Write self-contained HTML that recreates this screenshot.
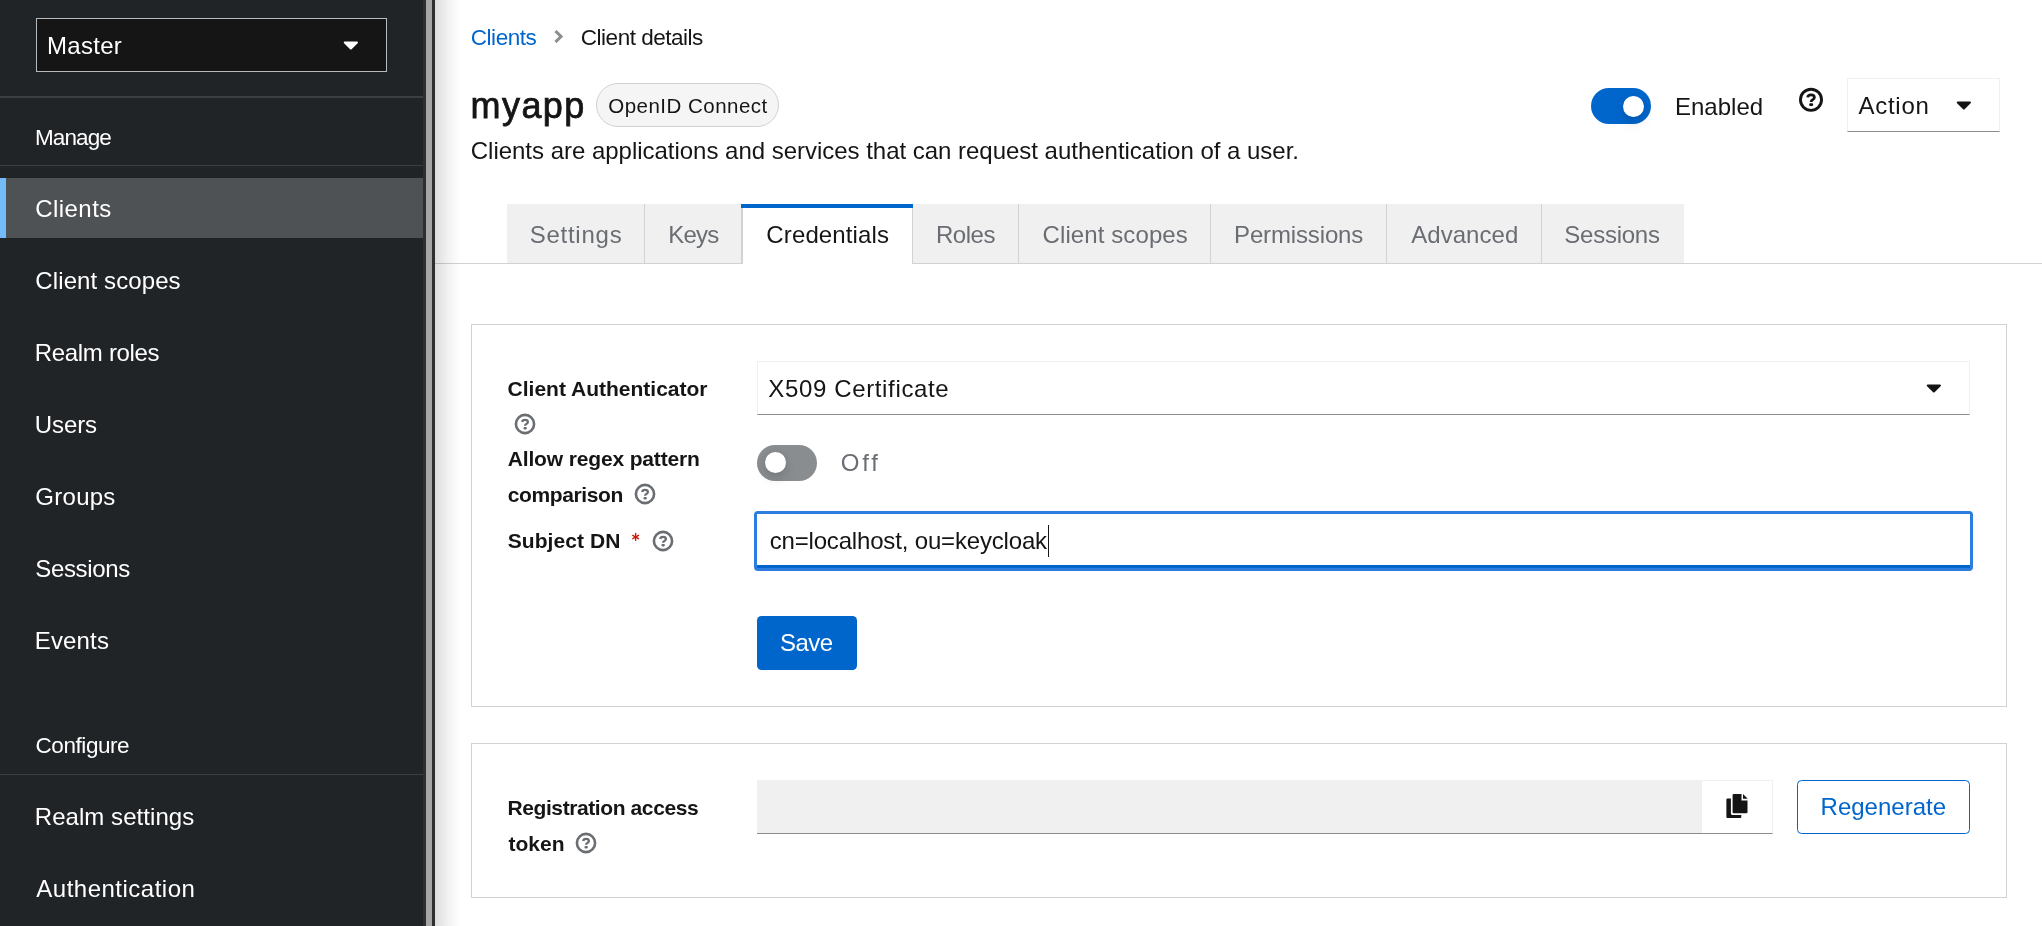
<!DOCTYPE html>
<html lang="en">
<head>
<meta charset="utf-8">
<title>Keycloak Administration Console</title>
<style>
*{box-sizing:border-box;margin:0;padding:0}
html,body{width:2042px;height:926px;overflow:hidden;background:#fff}
body{font-family:"Liberation Sans",sans-serif;color:#151515;position:relative;font-size:24px}
.abs{position:absolute}
.t{position:absolute;white-space:nowrap;line-height:1}
#txt{position:absolute;left:0;top:0;width:2042px;height:926px;will-change:transform}

/* ---------- sidebar ---------- */
#side{position:absolute;left:0;top:0;width:435px;height:926px;background:#212427}
#track{position:absolute;left:423px;top:0;width:12px;height:926px;background:#2f2f2f}
#thumb{position:absolute;left:426px;top:0;width:6px;height:926px;background:#a6a6a5}
#realm{position:absolute;left:36px;top:18px;width:351px;height:54px;background:#151515;border:1px solid #b8bbbe}
.hr{position:absolute;left:0;width:423px;background:#3c3f42}
#cur{position:absolute;left:0;top:178px;width:423px;height:60px;background:#4f5255}
#cur i{position:absolute;left:0;top:0;width:6px;height:60px;background:#73bcf7}

/* ---------- main ---------- */
#main{position:absolute;left:435px;top:0;width:1607px;height:926px;background:#fff}
#shadow{position:absolute;left:435px;top:0;width:26px;height:926px;background:linear-gradient(to right,rgba(3,3,3,.135),rgba(3,3,3,.085) 30%,rgba(3,3,3,.04) 60%,rgba(3,3,3,.012) 85%,rgba(3,3,3,0))}
.card{position:absolute;left:471px;width:1536px;border:1px solid #d2d2d2;background:#fff}
.tab{position:absolute;top:204px;height:59px;background:#f0f0f0;border-right:1px solid #d2d2d2}
.field{position:absolute;height:54px;border:1px solid #f0f0f0;border-bottom:1px solid #8a8d90;background:#fff}
.sw{position:absolute;width:60px;height:36px;border-radius:18px}
.knob{position:absolute;width:21.2px;height:21.2px;border-radius:50%;background:#fff;box-shadow:0 6px 12px 0 rgba(3,3,3,.12),0 0 6px 0 rgba(3,3,3,.06)}
</style>
</head>
<body>

<!-- ================= MAIN ================= -->
<div id="main"></div>

<!-- breadcrumb chevron -->
<svg class="abs" style="left:552px;top:29px" width="13" height="16" viewBox="0 0 13 16"><path d="M3.5 2 L9 7.5 L3.5 13" fill="none" stroke="#8a8d90" stroke-width="3.1"/></svg>

<!-- label pill -->
<div class="abs" style="left:596px;top:83px;width:183px;height:44px;border:1px solid #d2d2d2;border-radius:22px;background:#f5f5f5"></div>

<!-- enabled switch -->
<div class="sw" style="left:1591px;top:88px;background:#0066cc"></div>
<div class="knob" style="left:1623px;top:95.6px"></div>
<!-- help icon (header) -->
<svg class="abs" style="left:1798px;top:87px" width="26" height="26" viewBox="0 0 26 26"><circle cx="13" cy="12.8" r="10.55" fill="none" stroke="#151515" stroke-width="2.9"/><path d="M9.7 10.4 C9.9 8.7 11.2 7.9 13 7.9 C15 7.9 16.4 8.9 16.4 10.5 C16.4 12.7 13.1 12.5 13.1 14.9" fill="none" stroke="#151515" stroke-width="2.7"/><rect x="11.2" y="16.2" width="3.9" height="2.9" rx="1" fill="#151515"/></svg>
<!-- action dropdown -->
<div class="field" style="left:1847px;top:78px;width:153px"></div>
<svg class="abs" style="left:1956px;top:101px" width="16" height="9" viewBox="0 0 16 9"><path d="M1.8 1.5 H13.9 L7.85 7.45 Z" fill="#151515" stroke="#151515" stroke-width="2.1" stroke-linejoin="round"/></svg>

<!-- tabs -->
<div class="abs" style="left:435px;top:263px;width:1607px;height:1px;background:#d2d2d2"></div>
<div class="tab" style="left:507px;width:138px"></div>
<div class="tab" style="left:645px;width:97px"></div>
<div class="tab" style="left:742px;width:171px;background:#fff;border-top:4px solid #0066cc;border-left:1px solid #d2d2d2;height:60px"></div>
<div class="abs" style="left:741px;top:204px;width:172px;height:4px;background:#0066cc"></div>
<div class="tab" style="left:913px;width:106px"></div>
<div class="tab" style="left:1019px;width:192px"></div>
<div class="tab" style="left:1211px;width:176px"></div>
<div class="tab" style="left:1387px;width:155px"></div>
<div class="tab" style="left:1542px;width:142px;border-right:0"></div>

<!-- card 1 -->
<div class="card" style="top:324px;height:383px"></div>
<div class="field" style="left:757px;top:361px;width:1213px"></div>
<svg class="abs" style="left:1926px;top:384px" width="16" height="9" viewBox="0 0 16 9"><path d="M1.8 1.5 H13.9 L7.85 7.45 Z" fill="#151515" stroke="#151515" stroke-width="2.1" stroke-linejoin="round"/></svg>

<!-- off switch -->
<div class="sw" style="left:757px;top:445px;background:#8a8d90"></div>
<div class="knob" style="left:764.9px;top:452.2px"></div>

<!-- required asterisk -->
<svg class="abs" style="left:631px;top:532px" width="10" height="10" viewBox="0 0 10 10"><g stroke="#c9190b" stroke-width="1.35"><path d="M4.64 0.9 V8.95"/><path d="M1.3 3.05 L8 6.8"/><path d="M1.3 6.8 L8 3.05"/></g></svg>

<!-- focused input -->
<div class="abs" style="left:754px;top:511px;width:1219px;height:60px;border-radius:4px;background:#2d7de0"></div>
<div class="abs" style="left:757px;top:514px;width:1213px;height:54px;background:#fff;border-bottom:3px solid #0066cc"></div>
<div id="caret" class="abs" style="left:1047.6px;top:524.5px;width:1.5px;height:32px;background:#151515"></div>

<!-- save -->
<div class="abs" style="left:757px;top:616px;width:100px;height:54px;border-radius:4.5px;background:#0066cc"></div>

<!-- card 2 -->
<div class="card" style="top:743px;height:155px"></div>
<div class="abs" style="left:757px;top:780px;width:945px;height:54px;background:#f0f0f0;border-bottom:1px solid #8a8d90"></div>
<div class="field" style="left:1702px;top:780px;width:71px;border-left:0"></div>
<!-- copy icon -->
<svg class="abs" style="left:1726px;top:793px" width="23" height="26" viewBox="0 0 23 26"><path d="M6.6 2.1 Q6.6 1.1 7.6 1.1 H15.5 V7.4 H21.5 V19.3 Q21.5 20.3 20.5 20.3 H7.6 Q6.6 20.3 6.6 19.3 Z" fill="#151515"/><path d="M17 0.9 L21.5 5.4 V5.7 H17 Z" fill="#151515"/><path d="M4.9 5.4 V20.6 Q4.9 22 6.3 22 H15.3 V24 Q15.3 25 14.3 25 H1.4 Q0.4 25 0.4 24 V6.4 Q0.4 5.4 1.4 5.4 Z" fill="#151515"/></svg>
<!-- regenerate -->
<div class="abs" style="left:1797px;top:780px;width:173px;height:54px;border:1.5px solid #0066cc;border-radius:4.5px;background:#fff"></div>

<!-- field help icons -->
<svg class="abs hq" style="left:513.55px;top:413.4px" width="22" height="22" viewBox="0 0 22 22"><use href="#hq"/></svg>
<svg class="abs hq" style="left:633.5px;top:483.2px" width="22" height="22" viewBox="0 0 22 22"><use href="#hq"/></svg>
<svg class="abs hq" style="left:651.5px;top:530.45px" width="22" height="22" viewBox="0 0 22 22"><use href="#hq"/></svg>
<svg class="abs hq" style="left:575.45px;top:832.4px" width="22" height="22" viewBox="0 0 22 22"><use href="#hq"/></svg>
<svg width="0" height="0" style="position:absolute"><defs><g id="hq"><circle cx="11" cy="11" r="9.1" fill="none" stroke="#6a6e73" stroke-width="2.6"/><path d="M8.2 9 C8.4 7.5 9.5 6.8 11 6.8 C12.7 6.8 13.9 7.7 13.9 9 C13.9 10.9 11.1 10.8 11.1 12.8" fill="none" stroke="#6a6e73" stroke-width="2.3"/><rect x="9.5" y="13.9" width="3.3" height="2.5" rx="0.8" fill="#6a6e73"/></g></defs></svg>


<div id="shadow"></div>

<!-- ================= SIDEBAR ================= -->
<div id="side"></div>
<div id="track"></div>
<div id="thumb"></div>
<div id="realm"></div>
<svg class="abs" style="left:343px;top:41px" width="16" height="9" viewBox="0 0 16 9"><path d="M1.8 1.5 H13.9 L7.85 7.45 Z" fill="#fff" stroke="#fff" stroke-width="2.1" stroke-linejoin="round"/></svg>
<div class="hr" style="top:96px;height:2px"></div>
<div class="hr" style="top:165px;height:1px"></div>
<div id="cur"><i></i></div>
<div class="hr" style="top:774px;height:1px"></div>

<div id="txt">
<div id="bc1" class="t" style="left:470.80px;top:26.55px;font-size:22.5px;letter-spacing:-0.469px;color:#0066cc">Clients</div>
<div id="bc2" class="t" style="left:580.82px;top:26.55px;font-size:22.5px;letter-spacing:-0.482px;">Client details</div>
<div id="ttl" class="t" style="left:470.58px;top:87.80px;font-size:36px;letter-spacing:1.418px;-webkit-text-stroke:0.75px #151515">myapp</div>
<div id="pill" class="t" style="left:608.26px;top:95.55px;font-size:20.5px;letter-spacing:0.485px;">OpenID Connect</div>
<div id="desc" class="t" style="left:470.79px;top:138.80px;font-size:24px;letter-spacing:-0.021px;">Clients are applications and services that can request authentication of a user.</div>
<div id="ena" class="t" style="left:1674.93px;top:94.80px;font-size:24px;letter-spacing:0.016px;">Enabled</div>
<div id="act" class="t" style="left:1858.54px;top:93.80px;font-size:24px;letter-spacing:0.716px;">Action</div>
<div id="tb1" class="t" style="left:529.64px;top:222.80px;font-size:24px;letter-spacing:0.760px;color:#6a6e73">Settings</div>
<div id="tb2" class="t" style="left:668.22px;top:222.80px;font-size:24px;letter-spacing:-0.815px;color:#6a6e73">Keys</div>
<div id="tb3" class="t" style="left:766.34px;top:222.80px;font-size:24px;letter-spacing:0.125px;">Credentials</div>
<div id="tb4" class="t" style="left:935.93px;top:222.80px;font-size:24px;letter-spacing:-0.457px;color:#6a6e73">Roles</div>
<div id="tb5" class="t" style="left:1042.56px;top:222.80px;font-size:24px;letter-spacing:0.097px;color:#6a6e73">Client scopes</div>
<div id="tb6" class="t" style="left:1234.03px;top:222.80px;font-size:24px;letter-spacing:-0.141px;color:#6a6e73">Permissions</div>
<div id="tb7" class="t" style="left:1411.22px;top:222.80px;font-size:24px;letter-spacing:0.046px;color:#6a6e73">Advanced</div>
<div id="tb8" class="t" style="left:1564.28px;top:222.80px;font-size:24px;letter-spacing:-0.248px;color:#6a6e73">Sessions</div>
<div id="l1" class="t" style="left:507.56px;top:378.30px;font-size:21px;letter-spacing:0.003px;font-weight:bold">Client Authenticator</div>
<div id="sel" class="t" style="left:768.30px;top:376.80px;font-size:24px;letter-spacing:0.641px;">X509 Certificate</div>
<div id="l2" class="t" style="left:507.73px;top:448.30px;font-size:21px;letter-spacing:-0.149px;font-weight:bold">Allow regex pattern</div>
<div id="l3" class="t" style="left:507.74px;top:484.30px;font-size:21px;letter-spacing:-0.386px;font-weight:bold">comparison</div>
<div id="off" class="t" style="left:840.79px;top:450.80px;font-size:24px;letter-spacing:2.721px;color:#6a6e73">Off</div>
<div id="l4" class="t" style="left:507.67px;top:530.30px;font-size:21px;letter-spacing:0.078px;font-weight:bold">Subject DN</div>
<div id="inp" class="t" style="left:769.65px;top:528.80px;font-size:24px;letter-spacing:-0.169px;">cn=localhost, ou=keycloak</div>
<div id="save" class="t" style="left:780.08px;top:630.80px;font-size:24px;letter-spacing:-0.543px;color:#fff">Save</div>
<div id="l5" class="t" style="left:507.48px;top:797.30px;font-size:21px;letter-spacing:-0.403px;font-weight:bold">Registration access</div>
<div id="l6" class="t" style="left:508.48px;top:833.30px;font-size:21px;letter-spacing:0.035px;font-weight:bold">token</div>
<div id="regen" class="t" style="left:1820.57px;top:794.80px;font-size:24px;letter-spacing:0.002px;color:#0066cc">Regenerate</div>
<div id="rtxt" class="t" style="left:47.03px;top:33.80px;font-size:24px;letter-spacing:0.299px;color:#fff">Master</div>
<div id="sec1" class="t" style="left:35.00px;top:126.55px;font-size:22.5px;letter-spacing:-0.913px;color:#fff">Manage</div>
<div id="n1" class="t" style="left:35.37px;top:196.80px;font-size:24px;letter-spacing:0.417px;color:#fff">Clients</div>
<div id="n2" class="t" style="left:35.37px;top:268.80px;font-size:24px;letter-spacing:0.098px;color:#fff">Client scopes</div>
<div id="n3" class="t" style="left:34.80px;top:340.80px;font-size:24px;letter-spacing:-0.322px;color:#fff">Realm roles</div>
<div id="n4" class="t" style="left:34.80px;top:412.80px;font-size:24px;letter-spacing:-0.096px;color:#fff">Users</div>
<div id="n5" class="t" style="left:35.30px;top:484.80px;font-size:24px;letter-spacing:0.274px;color:#fff">Groups</div>
<div id="n6" class="t" style="left:35.19px;top:556.80px;font-size:24px;letter-spacing:-0.319px;color:#fff">Sessions</div>
<div id="n7" class="t" style="left:34.80px;top:628.80px;font-size:24px;letter-spacing:0.152px;color:#fff">Events</div>
<div id="sec2" class="t" style="left:35.51px;top:734.55px;font-size:22.5px;letter-spacing:-0.430px;color:#fff">Configure</div>
<div id="n8" class="t" style="left:34.80px;top:804.80px;font-size:24px;letter-spacing:0.051px;color:#fff">Realm settings</div>
<div id="n9" class="t" style="left:36.32px;top:876.80px;font-size:24px;letter-spacing:0.492px;color:#fff">Authentication</div>
</div>

</body>
</html>
